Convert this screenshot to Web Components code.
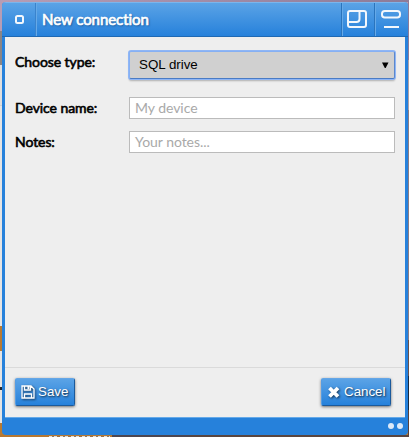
<!DOCTYPE html>
<html lang="en"><head><meta charset="utf-8"><title>New connection</title>
<style>
html,body{height:100%}
body{margin:0;overflow:hidden;font:15px Lato,sans-serif;color:#000}
</style></head><body>
<desk-top>
<app-window caption="New connection">
<form-row label="Choose type:" class="first"><drive-select>SQL drive</drive-select></form-row>
<form-row label="Device name:"><text-field>My device</text-field></form-row>
<form-row label="Notes:"><text-field>Your notes...</text-field></form-row>
<action-button slot="actions" icon="save" style="width:60px">Save</action-button>
<action-button slot="actions" icon="close" style="width:70px">Cancel</action-button>
</app-window>
</desk-top>
<script>
function define(name, html){
  customElements.define(name, class extends HTMLElement{
    constructor(){
      super();
      const t=document.createElement('template');
      t.innerHTML=typeof html==='function'?html(this):html;
      this.attachShadow({mode:'open'}).append(t.content.cloneNode(true));
    }
  });
}
define('desk-top',`<style>
:host{display:block;box-sizing:border-box;width:409px;height:437px;padding:2px 1px 2px 2px;
background:
linear-gradient(#242830,#242830) 0 387px/2px 3px no-repeat,
repeating-linear-gradient(90deg,#e9dfd2 0 3px,#8a7968 3px 5px,#ddd 5px 8px,#997047 8px 11px) 49px 436px/61px 1px no-repeat,
linear-gradient(90deg,#b67832 0 112px,#4c4650 112px 190px,#59453f 190px) 0 435px/409px 2px no-repeat,
linear-gradient(#8d7b98 0 60px,#b0a0a5 60px 110px,#8b7c85 110px 340px,#69504b 340px 376px,#1b2a3e 376px 410px,#5b4038 410px) 408px 0/1px 437px no-repeat,
linear-gradient(90deg,#b79db5,#8d7b98) 0 0/409px 2px no-repeat,
linear-gradient(#b79db5 0 31px,#8a8585 31px 65px,#dfdfdf 65px 105px,#d0d0d0 105px 106px,#e4e4e4 106px 326px,#b87a32 326px 351px,#e4e4e4 351px 423px,#b87a32 423px)}
</style><slot></slot>`);
define('app-window',h=>`<style>
:host{display:grid;grid-template-rows:35px 1fr 50px 18px;box-sizing:border-box;width:406px;height:433px;border-radius:4px;background:#2681db;overflow:hidden}
header{display:flex;box-sizing:border-box;background:linear-gradient(#5ba3e6,#2681db);border-top:1px solid #7bb5ec;border-bottom:1px solid #1f69b3;color:#fff}
.tool{flex:none;width:33px;box-sizing:border-box;border-left:1px solid #2a74bd;box-shadow:inset 1px 0 #65a9e8;display:flex}
.menu{width:33px;display:flex}
h1{flex:1;margin:0;padding-left:6px;font-size:15px;letter-spacing:-.05px;line-height:33px;font-weight:400;-webkit-text-stroke:.7px #fff;text-shadow:1px 1px 2px #174d85;border-left:1px solid #3a83cc;box-shadow:inset 1px 0 #65a9e8;white-space:nowrap}
svg{display:block;fill:none;stroke:#f3f7fc;stroke-width:2}
main,.foot{margin:0 3px;background:#eee}
main{padding:14px 10px 0;display:flex;flex-direction:column;box-sizing:border-box}
.foot{display:flex;justify-content:space-between;align-items:flex-start;box-sizing:border-box;border-top:1px solid #dadada;padding:10px 14px 0 10px;box-shadow:0 1px #65a9e8}
.grip{display:flex;justify-content:flex-end;gap:3px;padding:6px 5px 0 0}
.grip i{width:6px;height:6px;border-radius:50%;background:#dce9f8}
</style>
<header><div class="menu"><svg width="33" height="33"><rect x="14" y="13" width="7" height="7" rx="1.5"/></svg></div><h1>${h.getAttribute('caption')}</h1>
<div class="tool"><svg width="32" height="33"><rect x="6" y="8" width="18" height="16" rx="2"/><path d="M17.5 8v8q0 3-3 3H6"/></svg></div>
<div class="tool" style="width:34px"><svg width="33" height="33"><rect x="7" y="8" width="18" height="6.5" rx="2.8"/><path d="M9 24h15"/></svg></div></header>
<main><slot></slot></main><div class="foot"><slot name="actions"></slot></div><div class="grip"><i></i><i></i></div>`);
define('form-row',h=>`<style>
:host{display:grid;grid-template-columns:114px 266px;height:22px;margin-bottom:12px;line-height:22px}
:host(.first){height:28px;margin-bottom:18px}
label{font-size:14px;letter-spacing:-.07px;-webkit-text-stroke:.6px #000;white-space:nowrap}
</style><label>${h.getAttribute('label')}</label><slot></slot>`);
define('drive-select',`<style>
:host{display:flex;justify-content:space-between;align-items:center;box-sizing:border-box;height:28px;padding:0 5px 1px 9px;border:1px solid;border-color:#86b0f3 #5b87cc #4a7bc4 #86b0f3;border-radius:2px;background:#d0d0d0;box-shadow:0 0 0 1px #8fb6f6,0 2px 2px #0004;font:13.33px "Liberation Sans",sans-serif}
svg{display:block}
</style><span><slot></slot></span><svg width="8" height="8"><path d="M1 1.5h6.5L4.7 7H3.8z"/></svg>`);
define('text-field',`<style>
:host{display:block;box-sizing:border-box;height:22px;border:1px solid #bbb;background:#fff;padding-left:5px;line-height:20px;font-size:14px;letter-spacing:-.04px;color:#a9a9a9}
</style><slot></slot>`);
define('action-button',h=>`<style>
:host{display:flex;align-items:center;box-sizing:border-box;height:28px;padding:0 0 2px 5px;gap:2px;border:1px solid;border-color:#65a6e6 #1b5a9c #1b5a9c #559ce3;border-radius:2px;background:linear-gradient(#5ba3e6,#2681db);box-shadow:0 1px 3px #0008;font:13.33px "Liberation Sans",sans-serif;color:#fff;text-shadow:1px 1px 2px #000b;white-space:nowrap}
svg{display:block;width:15px;height:16px;flex:none;filter:drop-shadow(1px 1px 1px #0009);margin-top:2px}
</style><svg viewBox="0 0 15 16">${h.getAttribute('icon')==='save'
?'<path d="M1 2h9l3 3v9H1zM3.5 2v4h6V2M3.5 14v-4h7v4" fill="none" stroke="#fff" stroke-width="1.3"/><path d="M6.5 2h2v3h-2z" fill="#fff"/>'
:'<path d="M2.5 4l8.5 8.5M11 4l-8.5 8.5" stroke="#fff" stroke-width="3.8"/>'}</svg><slot></slot>`);
</script></body></html>
